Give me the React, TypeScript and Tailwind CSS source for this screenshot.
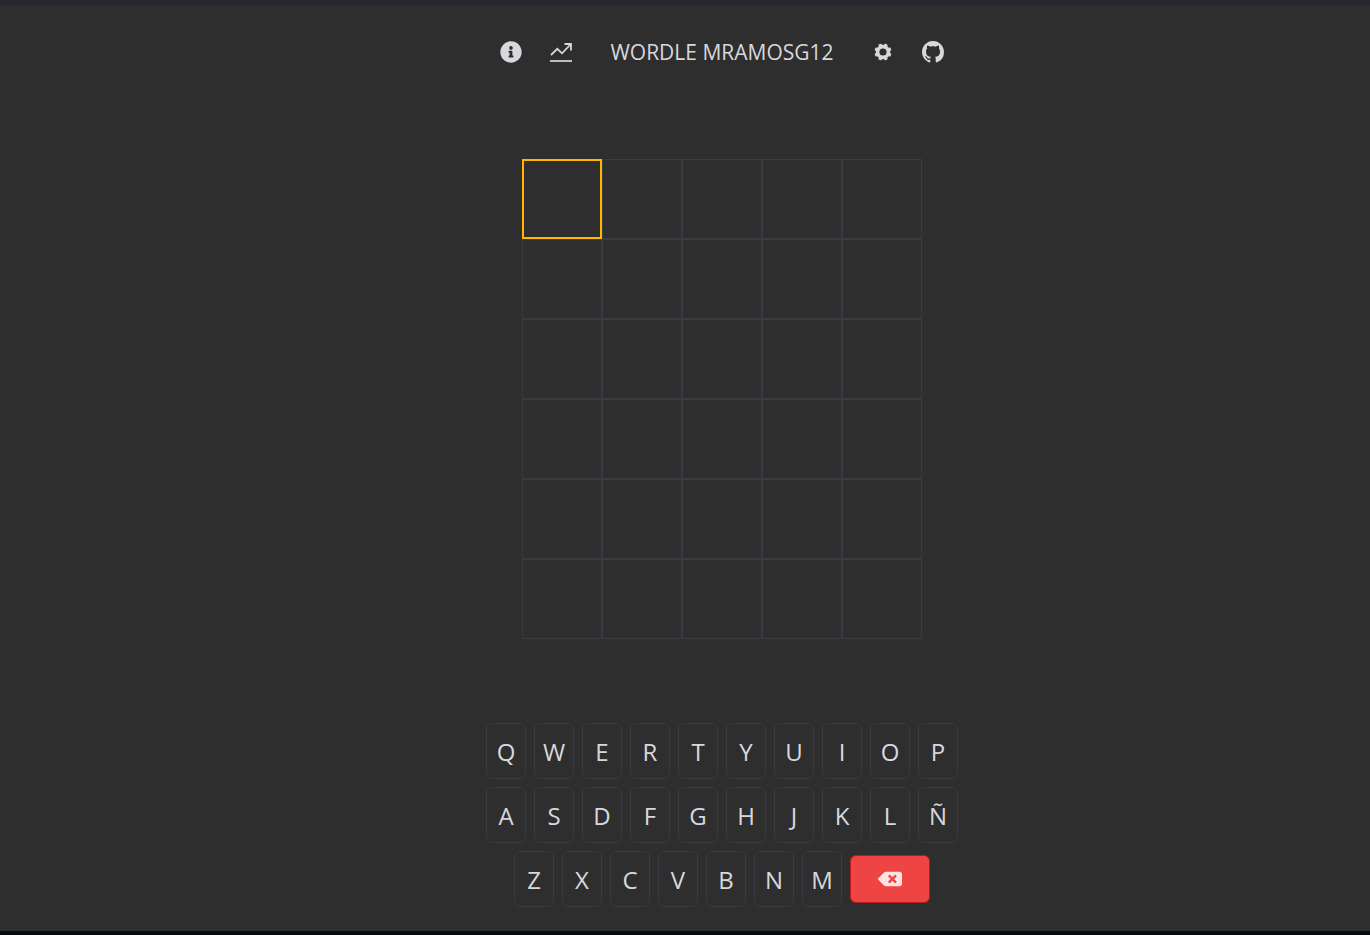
import { useState } from 'react';
import type { ReactNode } from 'react';
import { FaBackspace, FaInfoCircle } from 'react-icons/fa';
import { BsGithub } from 'react-icons/bs';

const LENGTH = 5;
const ATTEMPTS = 6;
const KEY_ROWS = ['QWERTYUIOP', 'ASDFGHJKLÑ', 'ZXCVBNM'];
const GEAR_TEETH = [22.5, 67.5, 112.5, 157.5, 202.5, 247.5, 292.5, 337.5];

function TrendIcon() {
  return (
    <svg viewBox="0 0 22 20" className="h-5 w-[22px]" fill="none" stroke="currentColor" aria-hidden="true">
      <path d="M1 13 L7.3 6.8 L12 11.3 L20 3 M14.5 2 H21 V8.5" strokeWidth="1.8" />
      <path d="M0 19 H22" strokeWidth="1.7" />
    </svg>
  );
}

function GearIcon() {
  return (
    <svg viewBox="0 0 18 18" className="size-[18px]" fill="none" stroke="currentColor" aria-hidden="true">
      <circle cx="9" cy="9" r="5.4" strokeWidth="3.6" />
      {GEAR_TEETH.map((angle) => (
        <path key={angle} d="M7.5 3 L7.9 0.9 H10.1 L10.5 3 Z" fill="currentColor" strokeWidth="0.9" strokeLinejoin="round" transform={`rotate(${angle} 9 9)`} />
      ))}
    </svg>
  );
}

function IconButton({ label, children }: { label: string; children: ReactNode }) {
  return (
    <button type="button" aria-label={label} className="flex h-12 w-[50px] items-center justify-center">
      {children}
    </button>
  );
}

function Key({ letter, onPress }: { letter: string; onPress: (letter: string) => void }) {
  return (
    <button
      type="button"
      onClick={() => onPress(letter)}
      className="flex h-14 w-10 items-center justify-center rounded-md border border-[#3a3944] pt-0.5 text-2xl"
    >
      {letter}
    </button>
  );
}

export default function App() {
  const [word, setWord] = useState('');
  const press = (letter: string) => setWord((w) => (w.length < LENGTH ? w + letter : w));

  return (
    <div className="flex min-h-screen flex-col border-t-[5px] border-b-4 border-t-[#28262d] border-b-[#080a11] bg-[#2e2e2e] font-['Open_Sans',sans-serif] text-[#d8d8dc]">
      <main className="flex flex-col items-center pt-[23px] pb-6 pl-[74px]">
        <header className="flex items-center">
          <IconButton label="Información">
            <FaInfoCircle className="size-[22px]" />
          </IconButton>
          <IconButton label="Estadísticas">
            <TrendIcon />
          </IconButton>
          <h1 className="w-[272px] text-center text-[21px] leading-8">WORDLE MRAMOSG12</h1>
          <IconButton label="Ajustes">
            <GearIcon />
          </IconButton>
          <a href="#github" aria-label="GitHub" className="flex h-12 w-[50px] items-center justify-center">
            <BsGithub className="size-[22px]" />
          </a>
        </header>

        <section aria-label="Tablero" className="mt-[83px] grid grid-cols-5">
          {Array.from({ length: LENGTH * ATTEMPTS }, (_, i) => (
            <div
              key={i}
              className={
                i === word.length
                  ? 'flex size-20 items-center justify-center border-2 border-[#ffb700] text-4xl'
                  : 'flex size-20 items-center justify-center border border-[#3a3944] text-4xl'
              }
            >
              {word[i]}
            </div>
          ))}
        </section>

        <section aria-label="Teclado" className="mt-[84px] flex flex-col items-center gap-2">
          {KEY_ROWS.map((row, i) => (
            <div key={row} className="flex items-center gap-2">
              {row.split('').map((letter) => (
                <Key key={letter} letter={letter} onPress={press} />
              ))}
              {i === KEY_ROWS.length - 1 && (
                <button
                  type="button"
                  aria-label="Borrar"
                  onClick={() => setWord((w) => w.slice(0, -1))}
                  className="flex h-12 w-20 items-center justify-center rounded-md border border-[#b91c1c] bg-[#ef4444] text-2xl text-[#fee2e2]"
                >
                  <FaBackspace />
                </button>
              )}
            </div>
          ))}
        </section>
      </main>
    </div>
  );
}
